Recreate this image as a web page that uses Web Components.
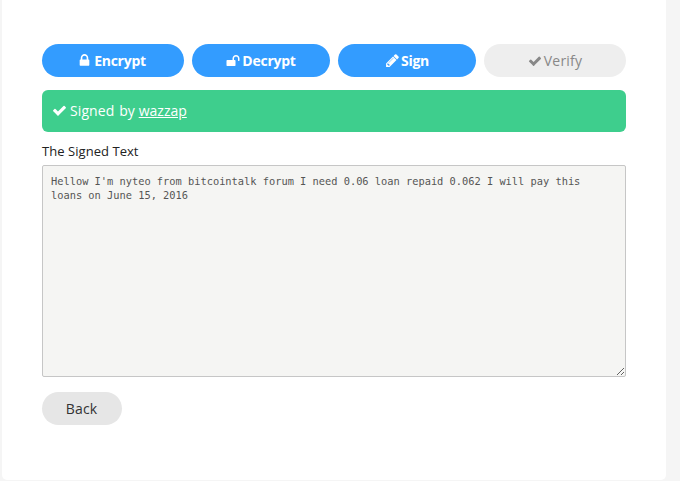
<!DOCTYPE html>
<html>
<head>
<meta charset="utf-8">
<style>
    html, body { margin: 0; height: 100%; overflow: hidden; }
    body { background: #f5f5f5; font-family: "Open Sans", "Liberation Sans", sans-serif; }
</style>
</head>
<body>
<sign-panel></sign-panel>
<script>
const ICONS = {
    lock: 'M640 768h512v-192q0-106-75-181t-181-75-181 75-75 181v192zm832 96v576q0 40-28 68t-68 28h-960q-40 0-68-28t-28-68v-576q0-40 28-68t68-28h32v-192q0-184 132-316t316-132 316 132 132 316v192h32q40 0 68 28t28 68z',
    unlock: 'M1728 576v256q0 26-19 45t-45 19h-64q-26 0-45-19t-19-45v-256q0-106-75-181t-181-75-181 75-75 181v192h96q40 0 68 28t28 68v576q0 40-28 68t-68 28h-960q-40 0-68-28t-28-68v-576q0-40 28-68t68-28h672v-192q0-185 131.5-316.5t316.5-131.5 316.5 131.5 131.5 316.5z',
    pencil: 'M491 1536l91-91-235-235-91 91v107h128v128h107zm523-928q0-22-22-22-10 0-17 7l-542 542q-7 7-7 17 0 22 22 22 10 0 17-7l542-542q7-7 7-17zm-54-192l416 416-832 832h-416v-416zm683 96q0 53-37 90l-166 166-416-416 166-165q36-38 90-38 53 0 91 38l235 234q37 39 37 91z',
    check: 'M1671 566q0 40-28 68l-724 724-136 136q-28 28-68 28t-68-28l-136-136-362-362q-28-28-28-68t28-68l136-136q28-28 68-28t68 28l294 295 656-657q28-28 68-28t68 28l136 136q28 28 28 68z'
};

class FaIcon extends HTMLElement {
    connectedCallback() {
        const shadow = this.shadowRoot || this.attachShadow({ mode: 'open' });
        const size = this.getAttribute('size') || 15;
        shadow.innerHTML = `
            <style>
                :host { display: inline-flex; }
                svg { display: block; fill: currentColor; }
            </style>
            <svg width="${size}" height="${size}" viewBox="0 0 1792 1792"><path d="${ICONS[this.getAttribute('name')]}"/></svg>
        `;
    }
}
customElements.define('fa-icon', FaIcon);

class TabButton extends HTMLElement {
    constructor() {
        super();
        this.attachShadow({ mode: 'open' }).innerHTML = `
            <style>
                :host {
                    display: flex;
                    align-items: center;
                    justify-content: center;
                    gap: 2px;
                    height: 33px;
                    border-radius: 17px;
                    background: #339cff;
                    color: #fff;
                    font-size: 14px;
                    font-weight: 700;
                    letter-spacing: -0.25px;
                }
                :host([disabled]) {
                    background: #eee;
                    color: #888;
                    font-weight: 500;
                    letter-spacing: 0.2px;
                }
            </style>
            <slot name="icon"></slot><slot></slot>
        `;
    }
}
customElements.define('tab-button', TabButton);

class AlertBox extends HTMLElement {
    constructor() {
        super();
        this.attachShadow({ mode: 'open' }).innerHTML = `
            <style>
                :host {
                    display: flex;
                    align-items: center;
                    gap: 3px;
                    box-sizing: border-box;
                    height: 42px;
                    padding: 0 10px 2px;
                    border-radius: 6px;
                    background: #3ece8d;
                    color: #fff;
                    font-size: 14px;
                    word-spacing: 1px;
                }
                ::slotted(a) {
                    color: inherit;
                    margin-left: -1px;
                    letter-spacing: 0;
                }
                span { letter-spacing: 0.1px; }
            </style>
            <slot name="icon"></slot><span><slot></slot></span>
        `;
    }
}
customElements.define('alert-box', AlertBox);

class SignedText extends HTMLElement {
    constructor() {
        super();
        this.attachShadow({ mode: 'open' }).innerHTML = `
            <style>
                :host { display: block; }
                label {
                    display: block;
                    height: 19px;
                    margin-bottom: 4px;
                    font-size: 13px;
                    line-height: 19px;
                    font-weight: 500;
                    letter-spacing: 0.05px;
                    color: #222;
                }
                textarea {
                    display: block;
                    box-sizing: border-box;
                    width: 584px;
                    height: 212px;
                    margin: 0;
                    padding: 8px 8px;
                    border: 1px solid #c6c6c6;
                    border-radius: 2px;
                    outline: none;
                    background: #f5f5f3;
                    color: #555;
                    font-family: "DejaVu Sans Mono", monospace;
                    font-size: 10.35px;
                    line-height: 14px;
                }
            </style>
            <label>The Signed Text</label>
            <textarea readonly>Hellow I'm nyteo from bitcointalk forum I need 0.06 loan repaid 0.062 I will pay this loans on June 15, 2016</textarea>
        `;
    }
}
customElements.define('signed-text', SignedText);

class BackButton extends HTMLElement {
    constructor() {
        super();
        this.attachShadow({ mode: 'open' }).innerHTML = `
            <style>
                :host {
                    display: flex;
                    align-items: center;
                    justify-content: center;
                    width: 80px;
                    height: 33px;
                    border-radius: 17px;
                    background: #e6e6e6;
                    color: #333;
                    font-size: 14px;
                    letter-spacing: 0.2px;
                    padding-right: 1px;
                    box-sizing: border-box;
                }
            </style>
            <slot></slot>
        `;
    }
}
customElements.define('back-button', BackButton);

class SignPanel extends HTMLElement {
    constructor() {
        super();
        this.attachShadow({ mode: 'open' }).innerHTML = `
            <style>
                :host {
                    display: flex;
                    flex-direction: column;
                    box-sizing: border-box;
                    width: 664px;
                    height: 480px;
                    margin-left: 2px;
                    padding: 44px 40px 0;
                    background: #fff;
                    border-radius: 0 0 5px 5px;
                }
                .tabs {
                    display: grid;
                    grid-template-columns: 142px 138px 138px 142px;
                    gap: 8px;
                    margin-bottom: 13px;
                }
                .encrypt { padding-right: 3px; }
                .sign fa-icon { margin-right: -1px; }
                signed-text { margin: 10px 0 15px; }
            </style>
            <div class="tabs">
                <tab-button class="encrypt"><fa-icon slot="icon" name="lock"></fa-icon>Encrypt</tab-button>
                <tab-button><fa-icon slot="icon" name="unlock" size="14"></fa-icon>Decrypt</tab-button>
                <tab-button class="sign"><fa-icon slot="icon" name="pencil"></fa-icon>Sign</tab-button>
                <tab-button disabled><fa-icon slot="icon" name="check" size="14"></fa-icon>Verify</tab-button>
            </div>
            <alert-box><fa-icon slot="icon" name="check"></fa-icon>Signed by <a href="#">wazzap</a></alert-box>
            <signed-text></signed-text>
            <back-button>Back</back-button>
        `;
    }
}
customElements.define('sign-panel', SignPanel);
</script>
</body>
</html>
